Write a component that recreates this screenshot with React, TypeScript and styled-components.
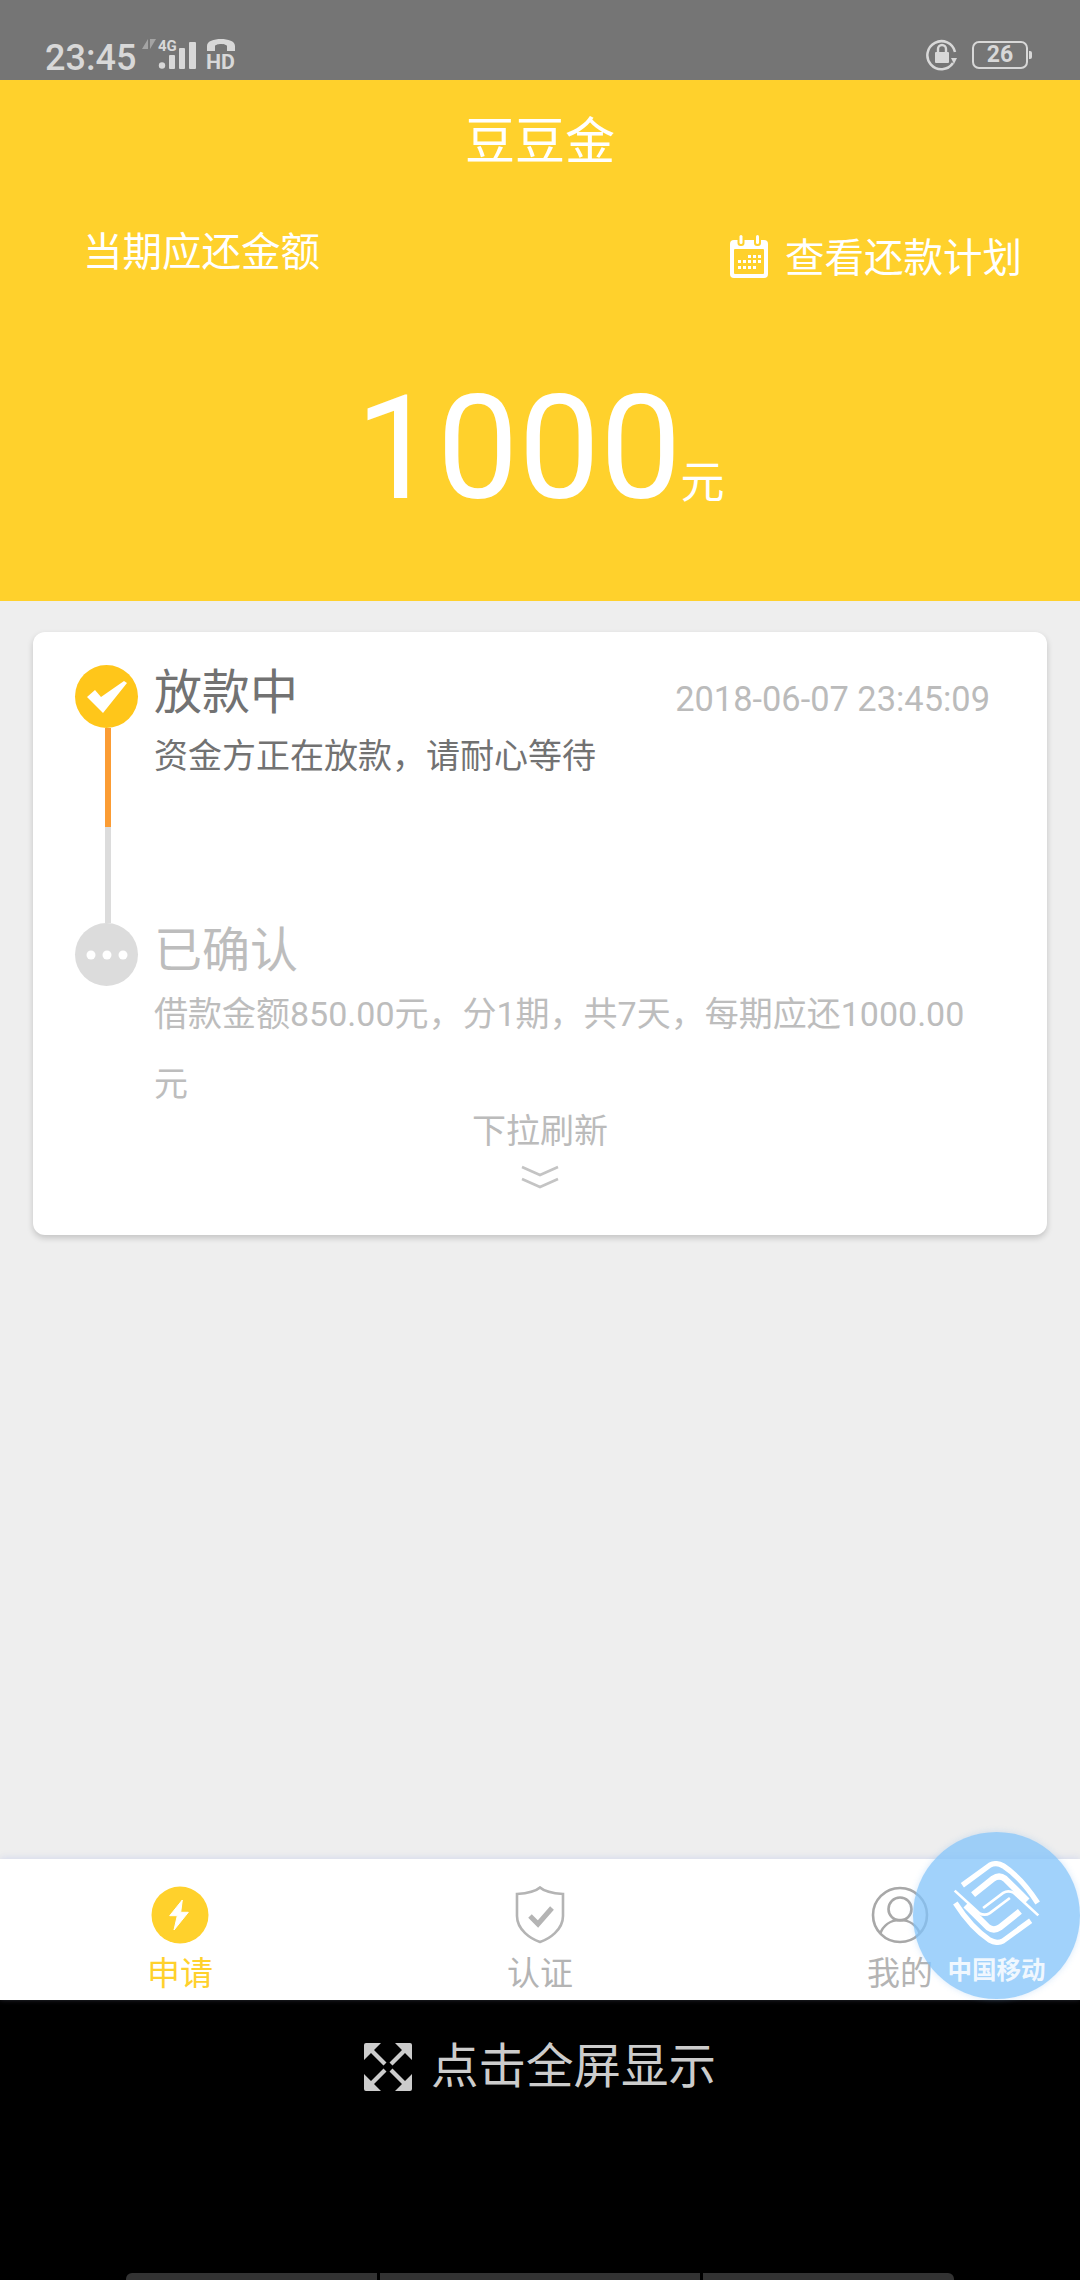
import * as React from 'react';
import styled, { createGlobalStyle } from 'styled-components';

const FONT = `Roboto, "Noto Sans CJK SC", sans-serif`;

const GlobalStyle = createGlobalStyle`
  html, body {
    margin: 0;
    padding: 0;
    background: #000;
  }
  * {
    box-sizing: border-box;
  }
`;

const Page = styled.div`
  position: relative;
  width: 1080px;
  height: 2280px;
  overflow: hidden;
  display: flex;
  flex-direction: column;
  background: #eeeeee;
  font-family: ${FONT};
`;

const StatusBar = styled.div`
  height: 80px;
  flex: none;
  background: #757575;
  color: #d8d8d8;
  display: flex;
  align-items: flex-start;
  justify-content: space-between;
  padding: 37px 48px 0 45px;
`;

const StatusGroup = styled.div`
  display: flex;
  align-items: flex-start;
`;

const Clock = styled.div`
  font-size: 36px;
  line-height: 42px;
  font-weight: 500;
`;

const NetIcon = styled.svg`
  margin-left: 6px;
  margin-top: -5px;
`;

const LockIcon = styled.svg`
  margin-top: 2px;
`;

const BatteryBox = styled.div`
  width: 56px;
  height: 28px;
  margin: 4px 4px 0 14px;
  border: 2px solid #d8d8d8;
  border-radius: 7px;
  font-size: 23px;
  font-weight: 700;
  line-height: 24px;
  text-align: center;
  position: relative;
  &::after {
    content: '';
    position: absolute;
    right: -6px;
    top: 8px;
    width: 3px;
    height: 8px;
    background: #d8d8d8;
    border-radius: 0 2px 2px 0;
  }
`;

const Header = styled.header`
  height: 521px;
  flex: none;
  background: #ffd12c;
  color: #fff;
  display: flex;
  flex-direction: column;
`;

const Title = styled.div`
  margin-top: 33px;
  text-align: center;
  font-size: 50px;
  line-height: 58px;
`;

const SummaryRow = styled.div`
  margin-top: 55px;
  padding: 0 58px 0 83px;
  display: flex;
  justify-content: space-between;
  align-items: flex-start;
  font-size: 39.500px;
  line-height: 54px;
`;

const PlanLink = styled.div`
  display: flex;
  align-items: center;
  gap: 16px;
  margin-top: 6px;
`;

const CalendarIcon = styled.svg`
  margin-top: -4px;
`;

const Amount = styled.div`
  margin-top: 97px;
  display: flex;
  justify-content: center;
  align-items: flex-end;
`;

const AmountValue = styled.span`
  font-size: 145px;
  font-weight: 400;
  line-height: 130px;
`;

const AmountUnit = styled.span`
  font-size: 44px;
  line-height: 54px;
  margin-left: -1px;
  margin-bottom: 3px;
`;

const Main = styled.main`
  flex: 1;
  padding: 31px 33px 0;
  min-height: 0;
`;

const Card = styled.section`
  height: 603px;
  background: #fff;
  border-radius: 12px;
  box-shadow: 0 3px 6px rgba(0, 0, 0, 0.18);
  padding: 33px 42px 0;
`;

const Step = styled.div`
  display: flex;
  gap: 16px;
`;

const Rail = styled.div`
  width: 63px;
  flex: none;
  display: flex;
  flex-direction: column;
  align-items: center;
`;

const Dot = styled.div<{ $color: string }>`
  width: 63px;
  height: 63px;
  border-radius: 50%;
  background: ${(p) => p.$color};
  display: flex;
  align-items: center;
  justify-content: center;
`;

const RailLine = styled.div<{ $color: string; $height: number }>`
  width: 6px;
  margin-left: 2px;
  height: ${(p) => p.$height}px;
  background: ${(p) => p.$color};
`;

const StepBody = styled.div`
  flex: 1;
  min-width: 0;
  padding-right: 15px;
`;

const StepHead = styled.div`
  height: 56px;
  display: flex;
  justify-content: space-between;
  align-items: center;
`;

const StepTitle = styled.div<{ $color: string }>`
  font-size: 48px;
  line-height: 56px;
  color: ${(p) => p.$color};
`;

const StepTime = styled.div`
  font-size: 34.400px;
  color: #bbbbbb;
  line-height: 44px;
  margin-top: 12px;
`;

const StepText = styled.div<{ $color: string }>`
  font-size: 34px;
  line-height: 70px;
  color: ${(p) => p.$color};
`;

const PullHint = styled.div`
  margin-top: -8px;
  text-align: center;
  color: #bbbbbb;
  font-size: 34px;
  line-height: 40px;
`;

const PullArrow = styled.svg`
  display: block;
  margin: 14px auto 0;
`;

const TabBar = styled.nav`
  height: 141px;
  flex: none;
  background: #fff;
  display: flex;
  box-shadow: 0 -2px 6px rgba(190, 200, 235, 0.45);
  position: relative;
`;

const Tab = styled.div<{ $active?: boolean }>`
  flex: 1;
  padding-top: 27px;
  display: flex;
  flex-direction: column;
  align-items: center;
  font-size: 33px;
  line-height: 38px;
  gap: 11px;
  color: ${(p) => (p.$active ? '#ffd12c' : '#b4b4b4')};
`;

const FloatBall = styled.div`
  position: absolute;
  left: 913px;
  top: 1832px;
  width: 167px;
  height: 167px;
  border-radius: 50%;
  background: rgba(130, 195, 250, 0.75);
  box-shadow: 0 0 6px rgba(120, 180, 240, 0.3);
  display: flex;
  flex-direction: column;
  align-items: center;
  color: rgba(255, 255, 255, 0.85);
  font-size: 24.500px;
  font-weight: 700;
  line-height: 30px;
  padding-top: 29px;
  gap: 11px;
`;

const Fullscreen = styled.div`
  height: 280px;
  flex: none;
  background: #000;
  color: #cccccc;
  display: flex;
  flex-direction: column;
  align-items: center;
  justify-content: space-between;
`;

const FullscreenButton = styled.div`
  margin-top: 39px;
  display: flex;
  align-items: center;
  gap: 19px;
  font-size: 47.500px;
  line-height: 56px;
`;

const NavStrip = styled.div`
  width: 828px;
  height: 7px;
  display: flex;
  gap: 3px;
  border-radius: 6px 6px 0 0;
  overflow: hidden;
`;

const NavSegment = styled.div<{ $width: number }>`
  width: ${(p) => p.$width}px;
  background: #333333;
`;

const CAL_DOTS = [
  [19, 20], [24, 20], [29, 20],
  [9, 25], [14, 25], [19, 25], [24, 25], [29, 25],
  [9, 31], [14, 31], [19, 31], [24, 31],
];

const ARROW = 'M0 2a2 2 0 0 1 2-2h15l-7 7 12.500 12.500-3 3L7 10l-7 7z';

const LOGO_HALF = (
  <>
    <path d="M68 112 150 52Q170 42 190 54 245 90 293 165" strokeWidth="16" />
    <path d="M100 140 160 92Q178 80 195 92L262 158" strokeWidth="19" />
    <path d="M45 128 118 195Q135 205 150 195L210 150" strokeWidth="8" />
  </>
);

const App: React.FunctionComponent = () => {
  return (
    <Page>
      <GlobalStyle />
      <StatusBar>
        <StatusGroup>
          <Clock>23:45</Clock>
          <NetIcon width="64" height="38" viewBox="0 -6 64 38">
            <path d="M0 11 6 1v10zM8 1v10l6-10z" fill="#a4a4a4" />
            <text x="16" y="13" fontSize="15" fontWeight="700" fill="#d8d8d8" fontFamily="Roboto, sans-serif">4G</text>
            <circle cx="20" cy="27.500" r="3.200" fill="#d8d8d8" />
            <rect x="27" y="17" width="6" height="14" rx="1" fill="#d8d8d8" />
            <rect x="37" y="10" width="6" height="21" rx="1" fill="#d8d8d8" />
            <rect x="47" y="4" width="7" height="27" rx="1" fill="#d8d8d8" />
          </NetIcon>
          <svg width="32" height="38" viewBox="0 0 32 38">
            <path d="M1 14V9C1 4 8 2 15 2s14 2 14 7v5h-8V9c0-1-3-2-6-2S9 8 9 9v5z" fill="#d8d8d8" />
            <text x="0" y="32" fontSize="21" fontWeight="700" fill="#d8d8d8" fontFamily="Roboto, sans-serif" textLength="29" lengthAdjust="spacingAndGlyphs">HD</text>
          </svg>
        </StatusGroup>
        <StatusGroup>
          <LockIcon width="32" height="32" viewBox="0 0 32 32">
            <path d="M27 24A14 14 0 1 1 29 13" fill="none" stroke="#d8d8d8" strokeWidth="2.500" />
            <path d="M25 19h6l-3 6z" fill="#d8d8d8" />
            <rect x="9" y="13" width="14" height="11" rx="1" fill="#d8d8d8" />
            <path d="M12 13V10a4 4 0 0 1 8 0v3" fill="none" stroke="#d8d8d8" strokeWidth="2.400" />
          </LockIcon>
          <BatteryBox>26</BatteryBox>
        </StatusGroup>
      </StatusBar>

      <Header>
        <Title>豆豆金</Title>
        <SummaryRow>
          <span>当期应还金额</span>
          <PlanLink>
            <CalendarIcon width="40" height="44" viewBox="0 0 40 44">
              <rect x="1" y="5" width="38" height="38" rx="4" fill="#fff" />
              <rect x="5" y="14" width="30" height="25" rx="1" fill="#ffd12c" />
              <rect x="8.500" y="0" width="7" height="11" rx="3" fill="#ffd12c" />
              <rect x="25" y="0" width="7" height="11" rx="3" fill="#ffd12c" />
              <rect x="10.500" y="0" width="3" height="9" rx="1.500" fill="#fff" />
              <rect x="27" y="0" width="3" height="9" rx="1.500" fill="#fff" />
              {CAL_DOTS.map(([x, y]) => (
                <rect key={`${x}-${y}`} x={x} y={y} width="3" height="3" fill="#fff" />
              ))}
            </CalendarIcon>
            <span>查看还款计划</span>
          </PlanLink>
        </SummaryRow>
        <Amount>
          <AmountValue>1000</AmountValue>
          <AmountUnit>元</AmountUnit>
        </Amount>
      </Header>

      <Main>
        <Card>
          <Step>
            <Rail>
              <Dot $color="#ffc61a">
                <svg width="42" height="34" viewBox="0 0 42 34">
                  <path d="M1 17 9 10l6 7L38 1l3 2-24 30z" fill="#fff" />
                </svg>
              </Dot>
              <RailLine $color="#fb9c34" $height={99} />
              <RailLine $color="#dcdcdc" $height={96} />
            </Rail>
            <StepBody>
              <StepHead>
                <StepTitle $color="#727272">放款中</StepTitle>
                <StepTime>2018-06-07 23:45:09</StepTime>
              </StepHead>
              <StepText $color="#727272">资金方正在放款，请耐心等待</StepText>
            </StepBody>
          </Step>
          <Step>
            <Rail>
              <Dot $color="#dcdcdc">
                <svg width="42" height="10" viewBox="0 0 42 10">
                  <circle cx="5" cy="5" r="4.500" fill="#fff" />
                  <circle cx="21" cy="5" r="4.500" fill="#fff" />
                  <circle cx="37" cy="5" r="4.500" fill="#fff" />
                </svg>
              </Dot>
            </Rail>
            <StepBody>
              <StepTitle $color="#bdbdbd">已确认</StepTitle>
              <StepText $color="#bdbdbd">借款金额850.00元，分1期，共7天，每期应还1000.00元</StepText>
            </StepBody>
          </Step>
          <PullHint>下拉刷新</PullHint>
          <PullArrow width="38" height="24" viewBox="0 0 38 24">
            <path d="M1 2 19 10 37 2M1 14 19 22 37 14" fill="none" stroke="#c4c4c4" strokeWidth="2.600" />
          </PullArrow>
        </Card>
      </Main>

      <TabBar>
        <Tab $active>
          <svg width="58" height="58" viewBox="0 0 58 58">
            <circle cx="29" cy="29" r="28.500" fill="#ffd12c" />
            <path d="M31.300 14 18.700 29.700h7.600L23 44l14.300-17.700h-7.600z" fill="#fff" stroke="#fff" strokeWidth="1" strokeLinejoin="round" />
          </svg>
          <span>申请</span>
        </Tab>
        <Tab>
          <svg width="50" height="58" viewBox="0 0 50 58">
            <path d="M25 1.500C20 6 10 7.500 2 8v22c0 14 14 23 23 26 9-3 23-12 23-26V8C40 7.500 30 6 25 1.500z" fill="none" stroke="#b4b4b4" strokeWidth="2.600" />
            <path d="M15 30l8 8 14-16" fill="none" stroke="#b4b4b4" strokeWidth="5" />
          </svg>
          <span>认证</span>
        </Tab>
        <Tab>
          <svg width="58" height="58" viewBox="0 0 58 58">
            <circle cx="29" cy="29" r="27" fill="none" stroke="#a8a8a8" strokeWidth="2.600" />
            <circle cx="29" cy="23" r="11.500" fill="none" stroke="#a8a8a8" strokeWidth="2.600" />
            <path d="M9 48c3-8 10-14 20-14s17 6 20 14" fill="none" stroke="#a8a8a8" strokeWidth="2.600" />
          </svg>
          <span>我的</span>
        </Tab>
      </TabBar>

      <Fullscreen>
        <FullscreenButton>
          <svg width="48" height="48" viewBox="0 0 48 48" fill="#cccccc">
            <path d={ARROW} />
            <path d={ARROW} transform="rotate(90 24 24)" />
            <path d={ARROW} transform="rotate(180 24 24)" />
            <path d={ARROW} transform="rotate(270 24 24)" />
          </svg>
          <span>点击全屏显示</span>
        </FullscreenButton>
        <NavStrip>
          <NavSegment $width={251} />
          <NavSegment $width={320} />
          <NavSegment $width={251} />
        </NavStrip>
      </Fullscreen>

      <FloatBall>
        <svg width="87" height="84" viewBox="40 40 260 250" fill="none" stroke="#fff">
          {LOGO_HALF}
          <g transform="rotate(180 170 165)">{LOGO_HALF}</g>
        </svg>
        <span>中国移动</span>
      </FloatBall>
    </Page>
  );
};

export default App;
